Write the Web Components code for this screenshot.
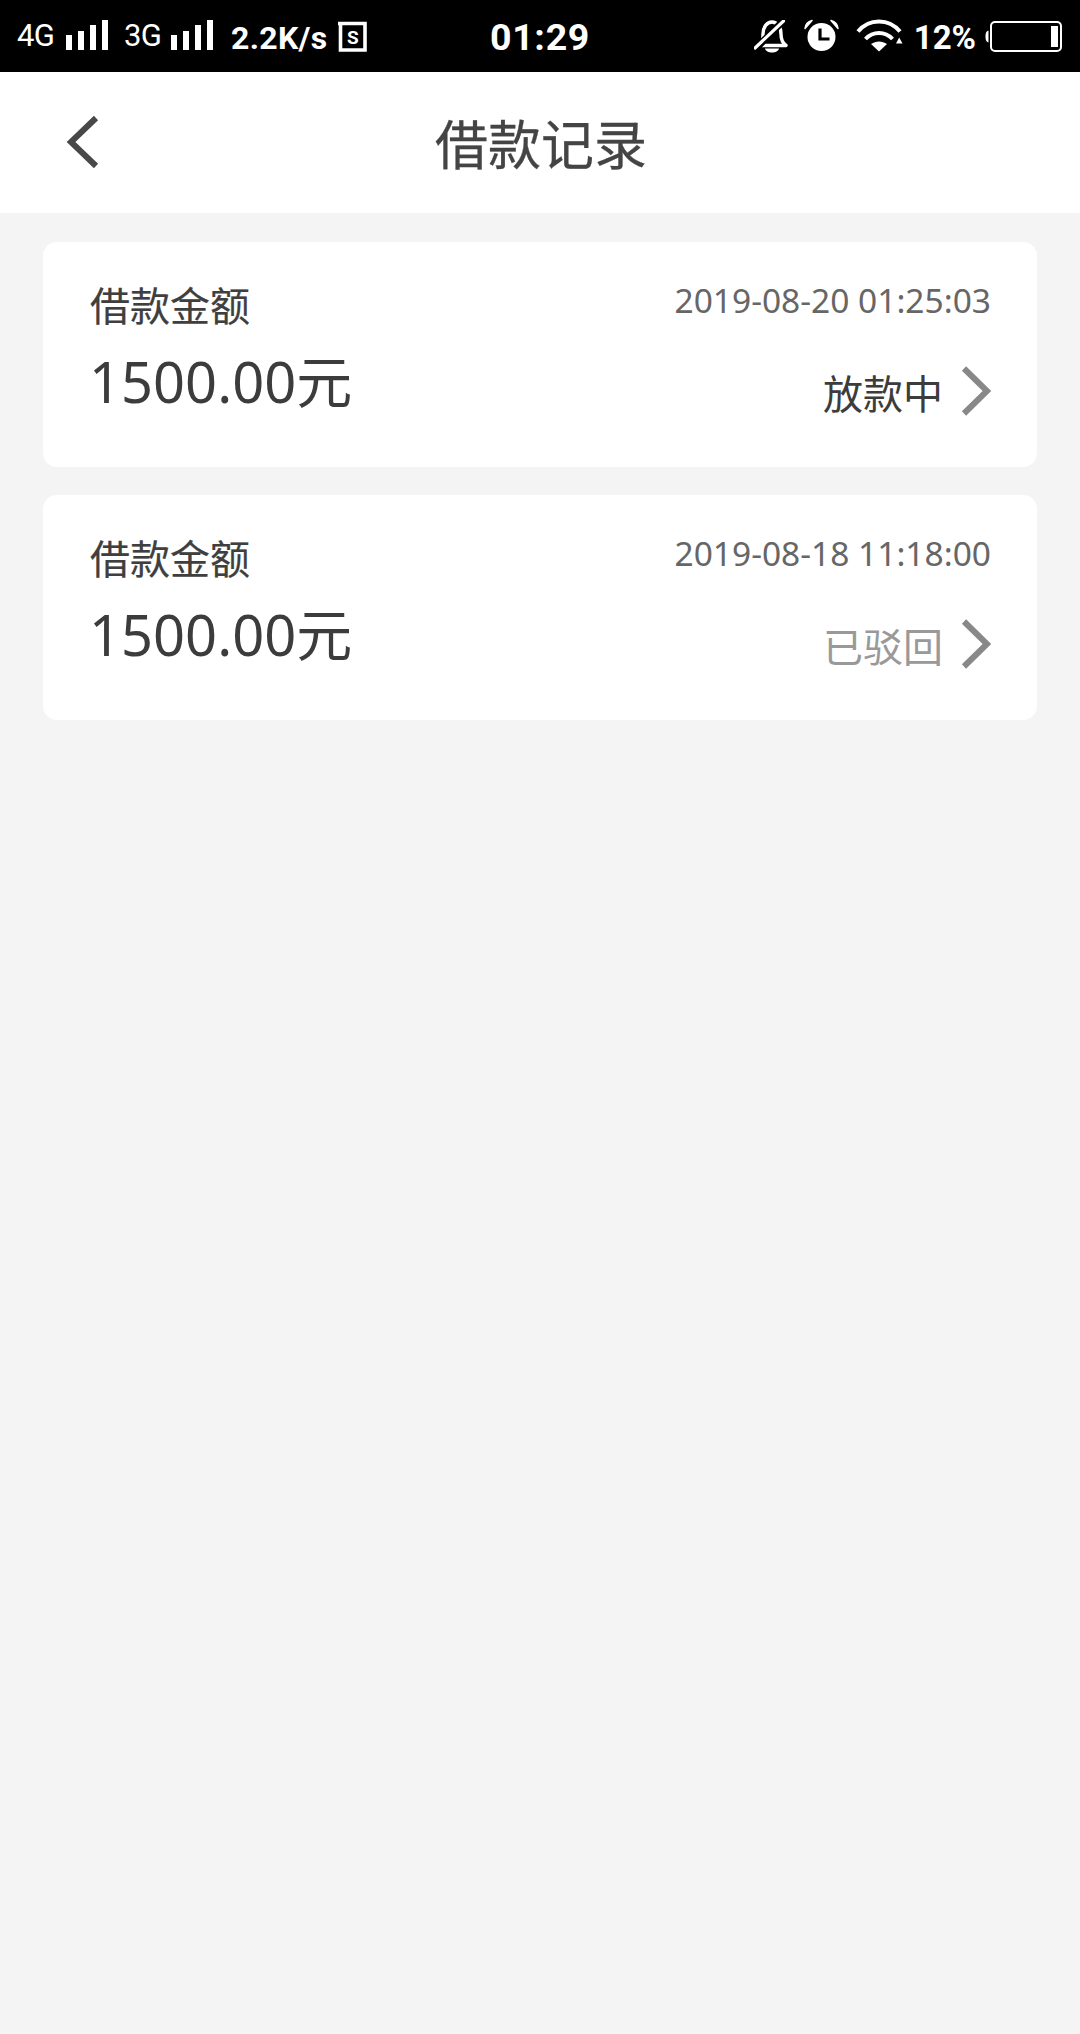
<!DOCTYPE html>
<html lang="zh-CN"><head><meta charset="utf-8"><title>借款记录</title>
<style>
html,body{margin:0;padding:0;background:#f4f4f4}
body{width:1080px;height:2034px;overflow:hidden;font-family:"Noto Sans","Noto Sans CJK SC",sans-serif}
</style></head><body>
<app-screen>
  <status-bar></status-bar>
  <nav-header title-text="借款记录"></nav-header>
  <loan-list>
    <loan-card date="2019-08-20 01:25:03" amount="1500.00元" status="放款中"></loan-card>
    <loan-card date="2019-08-18 11:18:00" amount="1500.00元" status="已驳回" muted></loan-card>
  </loan-list>
</app-screen>
<script>
function def(name, html, init){
  customElements.define(name, class extends HTMLElement{
    constructor(){super();this.attachShadow({mode:'open'}).innerHTML=html;}
    connectedCallback(){ if(init) init(this,this.shadowRoot); }
  });
}
def('app-screen',`<style>:host{display:flex;flex-direction:column;width:1080px;height:2034px;background:#f4f4f4}</style><slot></slot>`);

const bars=`<svg width="42" height="31" viewBox="0 0 42 31" fill="#fff"><rect x="0" y="15" width="6" height="15"/><rect x="12" y="11" width="6" height="19"/><rect x="24" y="5" width="6" height="25"/><rect x="36" y="0" width="6" height="30"/></svg>`;
def('status-bar',`<style>
:host{display:grid;grid-template-columns:1fr auto 1fr;align-items:center;height:72px;background:#000;color:#fff;font-family:Roboto,sans-serif;flex:none}
.l,.r{display:flex;align-items:center}
.net{font-size:31px;letter-spacing:-.6px;width:38px;line-height:30px;margin-top:-1px}
.sp{font-size:32px;font-weight:700;letter-spacing:.3px;line-height:30px}
.t{font-size:37.5px;font-weight:700;letter-spacing:.7px;margin-top:2px}
.pc{font-size:33px;font-weight:700;line-height:30px;margin-top:3px}
svg{display:block;flex:none}
</style>
<div class="l" style="padding-left:17px">
 <span class="net">4G</span><span style="margin-left:11px;margin-top:-1px">${bars}</span>
 <span class="net" style="margin-left:16px">3G</span><span style="margin-left:9px;margin-top:-1px">${bars}</span>
 <span class="sp" style="margin-left:18px;margin-top:3px">2.2K/s</span>
 <svg style="margin-left:11px;margin-top:1px" width="29" height="31" viewBox="0 0 29 31"><path d="M0 2.500H27V29H2.500V1" fill="none" stroke="#fff" stroke-width="3.600"/><text x="14.800" y="22.500" font-family="Roboto" font-size="19" font-weight="700" fill="#fff" text-anchor="middle">S</text></svg>
</div>
<div class="t">01:29</div>
<div class="r" style="justify-content:flex-end;padding-right:18px">
 <svg width="35" height="33" viewBox="0 0 35 33" fill="none"><path d="M6 25.500C8.500 23 9 20 9 14 9 7 13 2 18 2 23 2 27 7 27 14 27 20 28.500 23 32 25.500z" stroke="#fff" stroke-width="3.400" stroke-linejoin="round"/><path d="M11 28.500h14c-.5 2.500-3.500 4-7 4s-6.500-1.500-7-4z" fill="#fff"/><path d="M0 30.500L30 0" stroke="#000" stroke-width="7"/><path d="M1 28L29.500 1" stroke="#fff" stroke-width="3.200" stroke-linecap="round"/></svg>
 <svg style="margin-left:15px;margin-top:-2px" width="35" height="33" viewBox="0 0 35 33"><circle cx="17.500" cy="18" r="14" fill="#fff"/><path d="M1 9.500C1.500 5 4 2.500 8 1.500z M34 9.500C33.500 5 31 2.500 27 1.500z" fill="#fff" stroke="#fff" stroke-width="1.500" stroke-linejoin="round"/><path d="M16 9.500v10.500h9.500" fill="none" stroke="#000" stroke-width="3.200"/></svg>
 <svg style="margin-left:17px;margin-top:-1px" width="47" height="33" viewBox="0 0 47 33" fill="none"><path d="M2 12.500C13 -1 33 -1 44 12.500" stroke="#fff" stroke-width="4"/><path d="M9.500 20C17 12 29 12 36.500 20" stroke="#fff" stroke-width="4"/><path d="M15 25C20 21.500 26 21.500 31 25L23 32.500z" fill="#fff"/><path d="M40 24.500H46.500L43.200 18.500z" fill="#fff"/></svg>
 <span class="pc" style="margin-left:11px">12%</span>
 <svg style="margin-left:9px;margin-top:1px" width="77" height="31" viewBox="0 0 77 31"><path d="M3.500 9.500C1 10.500 .5 12 .5 15.500S1 20.500 3.500 21.500z" fill="#fff"/><rect x="6" y="1" width="70" height="29" rx="4" fill="none" stroke="#fff" stroke-width="2"/><rect x="66" y="5" width="7" height="21" fill="#fff"/></svg>
</div>`);

def('nav-header',`<style>
:host{display:grid;grid-template-columns:1fr auto 1fr;align-items:center;height:141px;background:#fff;color:#444;flex:none}
svg{display:block;margin-left:66px;margin-top:-1px}
h1{margin:0;font:400 53px/1 "Noto Sans CJK SC","Noto Sans",sans-serif;margin-top:0;padding-left:2px;color:#444;-webkit-text-stroke:.3px #444}
</style>
<svg width="33" height="54" viewBox="0 0 33 54" fill="none"><path d="M30 3L5 27 30 51" stroke="#484848" stroke-width="6"/></svg>
<h1 id="t"></h1><span></span>`,(el,s)=>{s.getElementById('t').textContent=el.getAttribute('title-text');});

def('loan-list',`<style>:host{display:flex;flex-direction:column;gap:28px;padding:29px 43px 0}</style><slot></slot>`);

def('loan-card',`<style>
:host{display:flex;justify-content:space-between;box-sizing:border-box;height:225px;background:#fff;border-radius:14px;padding:0 46px 0 47px}
.a,.b{display:flex;flex-direction:column}
.lab{font:400 40px/1 "Noto Sans CJK SC",sans-serif;color:#3f3f3f;margin-top:42px;-webkit-text-stroke:.2px #3f3f3f}
.amt{font-family:"Noto Sans","Noto Sans CJK SC",sans-serif;font-size:56px;line-height:66px;color:#3c3c3c;margin-top:24px;margin-left:-1px;white-space:nowrap}
.b{align-items:flex-end}
.date{font-family:"Noto Sans",sans-serif;font-size:33.500px;line-height:48px;color:#666;margin-top:34px;white-space:nowrap}
.row{display:flex;align-items:center;margin-top:44px}
.st{font:400 40px/1 "Noto Sans CJK SC",sans-serif;color:#3c3c3c}
:host([muted]) .st{color:#999}
svg{display:block;margin-left:17px;margin-top:-2px}
</style>
<div class="a"><div class="lab">借款金额</div><div class="amt" id="amt"></div></div>
<div class="b"><div class="date" id="date"></div><div class="row"><span class="st" id="st"></span>
<svg width="31" height="50" viewBox="0 0 31 50" fill="none"><path d="M4 2.500L27 25 4 47.500" stroke="#888" stroke-width="6"/></svg></div></div>`,
(el,s)=>{for(const k of ['amt:amount','date:date','st:status']){const [i,a]=k.split(':');s.getElementById(i).textContent=el.getAttribute(a);}});
</script>
</body></html>
